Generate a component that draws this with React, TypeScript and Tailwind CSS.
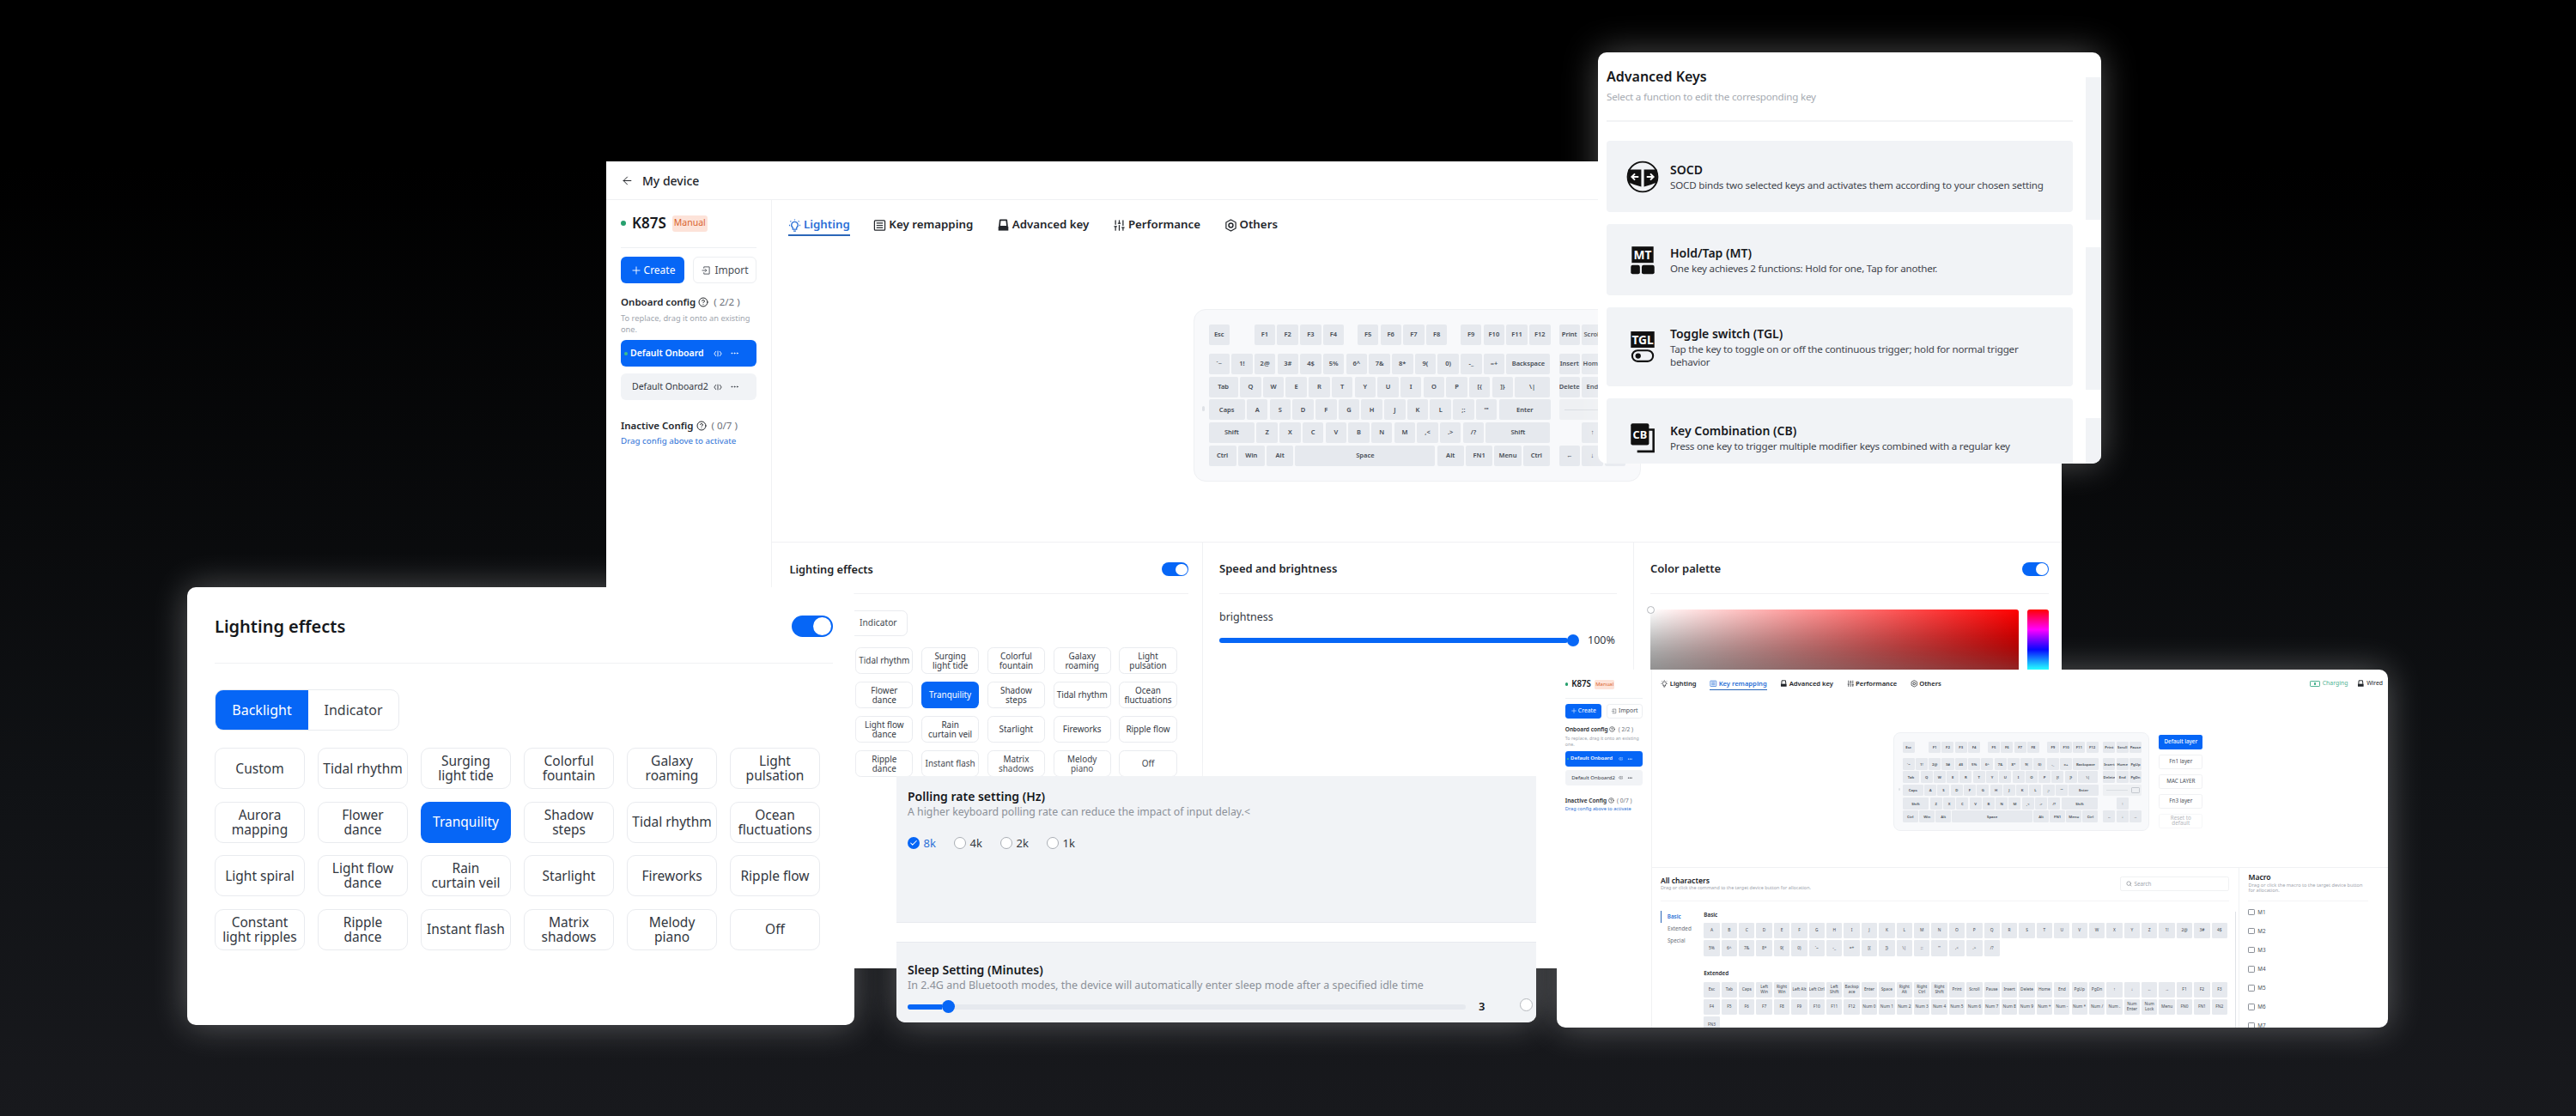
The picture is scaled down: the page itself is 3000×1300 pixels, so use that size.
import { ArrowLeft, Check, CircleHelp, Ellipsis, Plus, Search, SlidersVertical } from "lucide-react";
import React from "react";

const FONT = "[font-family:'Noto_Sans',sans-serif]";

function BulbIcon({ className }: { className?: string }) {
  return (
    <svg viewBox="0 0 16 16" fill="none" stroke="currentColor" strokeWidth="1.4" className={className}>
      <path d="M8 3.5a4 4 0 0 0-2.4 7.2V13h4.8v-2.3A4 4 0 0 0 8 3.5z" strokeLinejoin="round" />
      <path d="M6.5 15h3M8 .5v1.2M2.6 2.6l.9.9M13.4 2.6l-.9.9M1 8h1.2M13.8 8H15" />
    </svg>
  );
}

function ImportIcon({ className }: { className?: string }) {
  return (
    <svg viewBox="0 0 16 16" fill="none" stroke="currentColor" strokeWidth="1.2" className={className}>
      <path d="M5 5V2.5h8.5v11H5V11" />
      <path d="M2 8h7M7 5.8 9.2 8 7 10.2" />
    </svg>
  );
}

function EyeCodeIcon({ className }: { className?: string }) {
  return (
    <svg viewBox="0 0 12 12" fill="none" stroke="currentColor" strokeWidth="1.1" className={className}>
      <path d="M3.5 2.5 1 6l2.5 3.5M8.5 2.5 11 6 8.5 9.5M6 2v8" />
    </svg>
  );
}

function RemapIcon({ className }: { className?: string }) {
  return (
    <svg viewBox="0 0 16 16" fill="none" stroke="currentColor" strokeWidth="1.3" className={className}>
      <rect x="1.5" y="2" width="13" height="12" rx="1" />
      <path d="M4 5.2h8M4 8h8M4 10.8h8" />
    </svg>
  );
}

function KeycapIcon({ className }: { className?: string }) {
  return (
    <svg viewBox="0 0 16 16" fill="none" className={className}>
      <path d="M4 1.5h8l.8 8H3.2z" stroke="currentColor" strokeWidth="1.8" strokeLinejoin="round" />
      <path d="M1.8 9.5h12.4v5H1.8z" fill="currentColor" />
    </svg>
  );
}

function OthersIcon({ className }: { className?: string }) {
  return (
    <svg viewBox="0 0 16 16" fill="none" stroke="currentColor" strokeWidth="1.3" className={className}>
      <path d="M8 1 14 4.3v7.4L8 15l-6-3.3V4.3z" />
      <circle cx="8" cy="8" r="2.6" strokeWidth="1.6" />
    </svg>
  );
}

function Toggle() {
  return (
    <div className="flex h-[25px] w-[48px] items-center justify-end rounded-full bg-[#0666f6] pr-[2px]">
      <div className="size-[21px] rounded-full bg-white" />
    </div>
  );
}

const LIGHT_LABELS = [
  "Custom", "Tidal rhythm", "Surging\nlight tide", "Colorful\nfountain", "Galaxy\nroaming", "Light\npulsation",
  "Aurora\nmapping", "Flower\ndance", "Tranquility", "Shadow\nsteps", "Tidal rhythm", "Ocean\nfluctuations",
  "Light spiral", "Light flow\ndance", "Rain\ncurtain veil", "Starlight", "Fireworks", "Ripple flow",
  "Constant\nlight ripples", "Ripple\ndance", "Instant flash", "Matrix\nshadows", "Melody\npiano", "Off",
];

function LightingPanel() {
  return (
    <div className="pl-[32px] pr-[25px]">
      <div className="flex h-[89px] items-center justify-between border-b border-[#f0f1f3] pt-[3px]">
        <span className="text-[20px] font-semibold text-[#16181c]">Lighting effects</span>
        <Toggle />
      </div>
      <div className="mt-[30px] flex h-[48px] w-[215px] rounded-[10px] border border-[#e9ebef] text-[16px]">
        <div className="flex w-[108px] items-center justify-center rounded-l-[9px] bg-[#0666f6] text-white">Backlight</div>
        <div className="flex flex-1 items-center justify-center text-[#3a3f47]">Indicator</div>
      </div>
      <div className="mt-[20px] grid grid-cols-[repeat(6,105px)] gap-x-[15px] gap-y-[14.5px]">
        {LIGHT_LABELS.map((label, i) => (
          <div
            key={i}
            className={
              label === "Tranquility"
                ? "flex h-[48px] items-center justify-center rounded-[10px] bg-[#0666f6] text-center text-[15.5px] leading-[17px] text-white"
                : "flex h-[48px] items-center justify-center whitespace-pre-line rounded-[10px] border border-[#e9ebef] text-center text-[15.5px] leading-[17px] text-[#33383f]"
            }
          >
            {label}
          </div>
        ))}
      </div>
    </div>
  );
}

function Sidebar({ className }: { className: string }) {
  return (
    <div className={"w-[193px] shrink-0 border-r border-[#f0f1f3] px-[17px] " + className}>
      <div className="flex h-[39px] items-start gap-[7px] border-b border-[#eef0f3]">
        <div className="flex h-[20px] items-center gap-[7px]">
          <div className="size-[6px] rounded-full bg-[#27a06e]" />
          <span className="text-[17px] font-semibold text-[#16181c]">K87S</span>
          <span className="flex h-[19px] w-[41px] items-center justify-center rounded-[3px] bg-[#fde3d9] text-[10.5px] text-[#d9632f]">Manual</span>
        </div>
      </div>
      <div className="mt-[10px] flex gap-[10px] text-[12px]">
        <div className="flex h-[31px] w-[74px] items-center justify-center gap-[2px] rounded-md bg-[#0666f6] text-white">
          <Plus size={14} strokeWidth={1.6} />
          Create
        </div>
        <div className="flex h-[31px] w-[74px] items-center justify-center gap-[4px] rounded-md border border-[#eceef1] text-[#4a4f57]">
          <ImportIcon className="size-[12px]" />
          Import
        </div>
      </div>
      <div className="mt-[14px] flex items-center gap-[3px] text-[11.5px] leading-[16px]">
        <span className="font-semibold text-[#23262b]">Onboard config</span>
        <CircleHelp size={12} className="text-[#23262b]" />
        <span className="ml-[3px] text-[#6b7079]">( 2/2 )</span>
      </div>
      <p className="mt-[4px] text-[9.3px] leading-[13px] text-[#a0a5ad]">To replace, drag it onto an existing one.</p>
      <div className="mt-[6px] flex h-[31px] items-center rounded-md bg-[#0666f6] pl-[4px] text-[10.5px] font-semibold text-white">
        <div className="mr-[3px] size-[4px] rounded-full bg-[#3cc08c]" />
        <span className="w-[97px] whitespace-nowrap">Default Onboard</span>
        <EyeCodeIcon className="size-[10px]" />
        <Ellipsis size={11} className="ml-[9px]" />
      </div>
      <div className="mt-[8px] flex h-[31px] items-center rounded-md bg-[#f1f3f6] pl-[13px] text-[10.5px] text-[#33383f]">
        <span className="w-[95px] whitespace-nowrap">Default Onboard2</span>
        <EyeCodeIcon className="size-[10px]" />
        <Ellipsis size={11} className="ml-[9px]" />
      </div>
      <div className="mt-[22px] flex items-center gap-[3px] text-[11.5px] leading-[16px]">
        <span className="font-semibold text-[#23262b]">Inactive Config</span>
        <CircleHelp size={12} className="text-[#23262b]" />
        <span className="ml-[3px] text-[#6b7079]">( 0/7 )</span>
      </div>
      <p className="mt-[2px] text-[9.8px] leading-[15px] text-[#2a6fd6]">Drag config above to activate</p>
    </div>
  );
}

const TABS: [string, (p: { className?: string }) => React.ReactNode][] = [
  ["Lighting", BulbIcon],
  ["Key remapping", RemapIcon],
  ["Advanced key", KeycapIcon],
  ["Performance", ({ className }) => <SlidersVertical className={className} strokeWidth={2} />],
  ["Others", OthersIcon],
];

function Tabs({ active }: { active: number }) {
  return (
    <div className="flex gap-[27.5px]">
      {TABS.map(([label, Icon], i) => (
        <div
          key={label}
          className={
            i === active
              ? "flex h-[24px] items-center gap-[3px] border-b-2 border-[#2b66b8] text-[13.3px] font-semibold text-[#2a6fd6]"
              : "flex h-[24px] items-center gap-[3px] border-b-2 border-transparent text-[13.3px] font-semibold text-[#23262b]"
          }
        >
          <Icon className="size-[15px]" />
          {label}
        </div>
      ))}
    </div>
  );
}

type K = [string, number?];
const u = 24.5;
const keyRows: K[][] = [
  [["`~"], ["1!"], ["2@"], ["3#"], ["4$"], ["5%"], ["6^"], ["7&"], ["8*"], ["9("], ["0)"], ["-_"], ["=+"], ["Backspace", 51]],
  [["Tab", 34.4], ["Q"], ["W"], ["E"], ["R"], ["T"], ["Y"], ["U"], ["I"], ["O"], ["P"], ["[{"], ["]}"], ["\\|", 40.3]],
  [["Caps", 42.3], ["A"], ["S"], ["D"], ["F"], ["G"], ["H"], ["J"], ["K"], ["L"], [";:"], ["'\""], ["Enter", 60.5]],
  [["Shift", 53.8], ["Z"], ["X"], ["C"], ["V"], ["B"], ["N"], ["M"], [",<"], [".>"], ["/?"], ["Shift", 75]],
  [["Ctrl", 32], ["Win", 31.2], ["Alt", 31.2], ["Space", 163], ["Alt", 31.2], ["FN1", 31.2], ["Menu", 31.2], ["Ctrl", 31.2]],
];
const navRows = [
  ["Insert", "Home", "PgUp"],
  ["Delete", "End", "PgDn"],
];

function Keycap({ label, w = u }: { label: string; w?: number }) {
  return (
    <div
      className="flex h-[24px] shrink-0 items-center justify-center overflow-hidden rounded-[2px] bg-[#e6e9ee] text-[7.5px] font-semibold text-[#454b54]"
      style={{ width: w }}
    >
      {label}
    </div>
  );
}

function Keyboard() {
  return (
    <div className="relative flex h-[201px] w-[521px] shrink-0 gap-[10px] rounded-[14px] border border-[#eef0f3] bg-[#f8f9fb] pl-[17px] pt-[17px]">
      <div className="absolute left-[9px] top-[112px] h-[6px] w-[3px] rounded-full bg-[#dfe2e7]" />
      <div className="w-[398px]">
        <div className="mb-[10px] flex h-[24px]">
          <Keycap label="Esc" />
          <div className="w-[29.5px]" />
          <div className="flex gap-[2.2px]">
            {["F1", "F2", "F3", "F4"].map((k) => <Keycap key={k} label={k} />)}
          </div>
          <div className="w-[16px]" />
          <div className="flex gap-[2.2px]">
            {["F5", "F6", "F7", "F8"].map((k) => <Keycap key={k} label={k} />)}
          </div>
          <div className="w-[16px]" />
          <div className="flex gap-[2.2px]">
            {["F9", "F10", "F11", "F12"].map((k) => <Keycap key={k} label={k} />)}
          </div>
        </div>
        <div className="flex flex-col gap-[2.7px]">
          {keyRows.map((row, i) => (
            <div key={i} className="flex gap-[2.2px]">
              {row.map(([label, w], j) => <Keycap key={j} label={label} w={w} />)}
            </div>
          ))}
        </div>
      </div>
      <div className="w-[78px]">
        <div className="mb-[10px] flex gap-[2.2px]">
          {["Print", "Scroll", "Pause"].map((k) => <Keycap key={k} label={k} />)}
        </div>
        <div className="flex flex-col gap-[2.7px]">
          {navRows.map((row, i) => (
            <div key={i} className="flex gap-[2.2px]">
              {row.map((k) => <Keycap key={k} label={k} />)}
            </div>
          ))}
          <div className="flex h-[24px] items-center justify-between rounded-[2px] bg-[#eef0f3] pl-[6px] pr-[3px]">
            <div className="h-px w-[44px] bg-[#dadde2]" />
            <div className="h-[13px] w-[18px] rounded-[2px] border border-[#c4c8cf]" />
          </div>
          <div className="flex justify-center"><Keycap label="↑" /></div>
          <div className="flex gap-[2.2px]">
            {["←", "↓", "→"].map((k) => <Keycap key={k} label={k} />)}
          </div>
        </div>
      </div>
    </div>
  );
}

function MainWindow() {
  return (
    <div className="absolute left-[706px] top-[188px] flex h-[940px] w-[1695px] flex-col bg-white">
      <div className="flex h-[45px] shrink-0 items-center gap-[10px] border-b border-[#f0f1f3] pl-[17px] text-[14px] font-medium text-[#23262b]">
        <ArrowLeft size={15} strokeWidth={1.6} />
        My device
      </div>
      <div className="flex flex-1">
        <Sidebar className="pt-[17px]" />
        <div className="flex flex-1 flex-col">
          <div className="pl-[19px] pt-[18px]"><Tabs active={0} /></div>
          <div className="flex h-[357px] items-center justify-center border-b border-[#f0f1f3] pt-[15px]"><Keyboard /></div>
          <div className="flex flex-1">
            <div className="w-[502px] shrink-0 border-r border-[#f0f1f3]">
              <div className="pt-[4px] [zoom:0.64]"><LightingPanel /></div>
            </div>
            <div className="w-[502px] shrink-0 border-r border-[#f0f1f3] px-[19px]">
              <div className="flex h-[60px] items-center border-b border-[#f0f1f3] pt-[3px] text-[13px] font-semibold text-[#23262b]">Speed and brightness</div>
              <div className="mt-[18px] text-[12.5px] leading-[17px] text-[#33383f]">brightness</div>
              <div className="mt-[10px] flex items-center">
                <div className="h-[6px] w-[406px] rounded-full bg-[#0666f6]" />
                <div className="-ml-[1px] h-[14px] w-[14px] rounded-full bg-[#0666f6]" />
                <span className="ml-[10px] text-[12.5px] text-[#33383f]">100%</span>
              </div>
            </div>
            <div className="flex-1 pl-[19px] pr-[15px]">
              <div className="flex h-[60px] items-center justify-between border-b border-[#f0f1f3] pt-[3px] text-[13px] font-semibold text-[#23262b]">
                Color palette
                <div className="[zoom:0.64]"><Toggle /></div>
              </div>
              <div className="relative mt-[18px] flex gap-[10px]">
                <div className="absolute -left-[4px] -top-[4px] size-[9px] rounded-full border border-[#b5b8bd] bg-white" />
                <div className="h-[140px] w-[429px] rounded-[3px] bg-[linear-gradient(to_top,#000,transparent),linear-gradient(to_right,#fff,#f00)]" />
                <div className="h-[140px] w-[25px] rounded-[3px] bg-[linear-gradient(to_bottom,#f00,#f0f,#00f,#0ff,#0f0,#ff0,#f00)]" />
              </div>
            </div>
          </div>
        </div>
      </div>
    </div>
  );
}

const ADV = [
  {
    t: "SOCD",
    d: "SOCD binds two selected keys and activates them according to your chosen setting",
    h: "h-[83px]",
    icon: (
      <svg viewBox="0 0 36 36" className="size-[38px]">
        <circle cx="18" cy="18" r="16.5" fill="none" stroke="#111" strokeWidth="1.8" />
        <path d="M2 10h14.5v19l-8-2.5L2 24zM19.5 10H34v14l-6.5 2.5-8 2.5z" fill="#111" />
        <path d="M13.5 18H6m3.5-3.5L6 18l3.5 3.5M22.5 18H30m-3.5-3.5L30 18l-3.5 3.5" fill="none" stroke="#fff" strokeWidth="1.8" />
      </svg>
    ),
  },
  {
    t: "Hold/Tap (MT)",
    d: "One key achieves 2 functions: Hold for one, Tap for another.",
    h: "h-[83px]",
    icon: (
      <svg viewBox="0 0 36 36" className="size-[38px]">
        <rect x="6" y="3" width="24" height="18" fill="#111" />
        <text x="18" y="17" textAnchor="middle" fontSize="13" fontWeight="700" fill="#fff" fontFamily="Noto Sans, sans-serif">MT</text>
        <rect x="5" y="23.5" width="10" height="10" rx="2" fill="#111" />
        <rect x="17" y="23.5" width="14" height="10" rx="2" fill="#111" />
      </svg>
    ),
  },
  {
    t: "Toggle switch (TGL)",
    d: "Tap the key to toggle on or off the continuous trigger; hold for normal trigger behavior",
    h: "h-[92px]",
    icon: (
      <svg viewBox="0 0 36 36" className="size-[38px]">
        <rect x="5" y="1" width="26" height="18" fill="#111" />
        <text x="18" y="15" textAnchor="middle" fontSize="13" fontWeight="700" fill="#fff" fontFamily="Noto Sans, sans-serif">TGL</text>
        <rect x="6.5" y="22" width="23" height="12" rx="6" fill="none" stroke="#111" strokeWidth="2" />
        <circle cx="13" cy="28" r="3" fill="#111" />
      </svg>
    ),
  },
  {
    t: "Key Combination (CB)",
    d: "Press one key to trigger multiple modifier keys combined with a regular key",
    h: "h-[90px]",
    icon: (
      <svg viewBox="0 0 36 36" className="size-[38px]">
        <path d="M12 10h18v24H12" fill="none" stroke="#111" strokeWidth="2.4" />
        <rect x="5" y="3" width="20" height="24" rx="2" fill="#111" />
        <text x="15" y="20" textAnchor="middle" fontSize="12" fontWeight="700" fill="#fff" fontFamily="Noto Sans, sans-serif">CB</text>
      </svg>
    ),
  },
];

function AdvancedWindow() {
  return (
    <div className="absolute left-[1861px] top-[61px] flex h-[479px] w-[586px] overflow-hidden rounded-[10px] bg-white shadow-[0_0_40px_rgba(255,255,255,0.3)]">
      <div className="w-[553px] shrink-0 pl-[10px]">
        <div className="h-[81px] border-b-2 border-[#f2f3f5] pt-[15px]">
          <div className="text-[16px] font-semibold leading-[26px] text-[#16181c]">Advanced Keys</div>
          <div className="mt-[1px] text-[11.6px] leading-[20px] tracking-[-0.2px] text-[#a5aab1]">Select a function to edit the corresponding key</div>
        </div>
        <div className="mt-[22px] flex flex-col gap-[14px]">
          {ADV.map((a) => (
            <div key={a.t} className={a.h + " flex shrink-0 items-center rounded-[4px] bg-[#f1f3f6] pl-[22px] pr-[29px]"}>
              <div className="mr-[13px] flex w-[39px] shrink-0 justify-center">{a.icon}</div>
              <div>
                <div className="text-[14px] font-semibold leading-[20px] text-[#16181c]">{a.t}</div>
                <div className="text-[11.6px] leading-[15px] tracking-[-0.2px] text-[#3f444c]">{a.d}</div>
              </div>
            </div>
          ))}
        </div>
      </div>
      <div className="ml-[15px] flex flex-1 flex-col pt-[29px]">
        <div className="h-[166px] shrink-0 bg-[#f1f3f6]" />
        <div className="mt-[32px] h-[166px] shrink-0 bg-[#f1f3f6]" />
        <div className="mt-[33px] h-[60px] shrink-0 bg-[#f1f3f6]" />
      </div>
    </div>
  );
}

function LightingWindow() {
  return (
    <div className="absolute left-[218px] top-[684px] h-[510px] w-[777px] rounded-[10px] bg-white shadow-[0_0_40px_rgba(255,255,255,0.3)]">
      <LightingPanel />
    </div>
  );
}

function PollingWindow() {
  return (
    <div className="absolute left-[1044px] top-[904px] flex h-[287px] w-[745px] flex-col overflow-hidden rounded-b-[10px] bg-white shadow-[0_0_40px_rgba(255,255,255,0.3)]">
      <div className="h-[171px] shrink-0 border-b border-[#e8eaef] bg-[#f1f3f6] pl-[13px] pt-[14px]">
        <div className="text-[14px] font-semibold leading-[20px] text-[#16181c]">Polling rate setting (Hz)</div>
        <div className="text-[12.3px] leading-[16px] text-[#8b9098]">A higher keyboard polling rate can reduce the impact of input delay.&lt;</div>
        <div className="mt-[19px] flex gap-[21px] text-[13px] leading-[18px] text-[#33383f]">
          <div className="flex w-[33px] items-center gap-[5px] text-[#2a6fd6]">
            <div className="flex size-[14px] items-center justify-center rounded-full bg-[#0666f6] text-white"><Check size={10} strokeWidth={2.5} /></div>
            8k
          </div>
          {["4k", "2k", "1k"].map((r) => (
            <div key={r} className="flex w-[33px] items-center gap-[5px]">
              <div className="size-[14px] rounded-full border border-[#a9adb4] bg-white" />
              {r}
            </div>
          ))}
        </div>
      </div>
      <div className="h-[22px] shrink-0 bg-white" />
      <div className="flex-1 border-t border-[#e8eaef] bg-[#f1f3f6] pl-[13px] pt-[22px]">
        <div className="text-[14px] font-semibold leading-[20px] text-[#16181c]">Sleep Setting (Minutes)</div>
        <div className="text-[12.5px] leading-[16px] text-[#8b9098]">In 2.4G and Bluetooth modes, the device will automatically enter sleep mode after a specified idle time</div>
        <div className="mt-[9px] flex h-[15px] items-center">
          <div className="flex h-[6px] w-[650px] items-center rounded-full bg-[#e6e9ee]">
            <div className="h-[6px] w-[40px] rounded-l-full bg-[#0666f6]" />
            <div className="size-[15px] rounded-full bg-[#0666f6]" />
          </div>
          <span className="ml-[15px] text-[13px] font-semibold text-[#16181c]">3</span>
          <div className="ml-[41px] -mt-[4px] size-[15px] rounded-full border border-[#b5b8bd] bg-white" />
        </div>
      </div>
    </div>
  );
}

const BASIC = "A B C D E F G H I J K L M N O P Q R S T U V W X Y Z 1! 2@ 3# 4$ 5% 6^ 7& 8* 9( 0) `~ -_ =+ [{ ]} \\| ;: '\" ,< .> /?".split(" ");
const EXTENDED = [
  "Esc", "Tab", "Caps", "Left Win", "Right Win", "Left Alt", "Left Ctrl", "Left Shift", "Backsp ace", "Enter", "Space", "Right Alt", "Right Ctrl", "Right Shift", "Print", "Scroll", "Pause", "Insert", "Delete", "Home", "End", "PgUp", "PgDn", "↑", "↓", "←", "→", "F1", "F2", "F3",
  "F4", "F5", "F6", "F7", "F8", "F9", "F10", "F11", "F12", "Num 0", "Num 1", "Num 2", "Num 3", "Num 4", "Num 5", "Num 6", "Num 7", "Num 8", "Num 9", "Num +", "Num -", "Num *", "Num /", "Num .", "Num Enter", "Num Lock", "Menu", "FN0", "FN1", "FN2",
  "FN3",
];

function CharGrid({ keys }: { keys: string[] }) {
  return (
    <div className="grid grid-cols-[repeat(30,32px)] gap-[3.6px]">
      {keys.map((k, i) => (
        <div key={i} className="flex h-[32px] items-center justify-center rounded-[2px] bg-[#e6e9ee] text-center text-[8.5px] leading-[10px] text-[#454b54]">
          {k}
        </div>
      ))}
    </div>
  );
}

function RemapWindow() {
  return (
    <div className="absolute left-[1813px] top-[780px] h-[417px] w-[968px] overflow-hidden rounded-[10px] bg-white shadow-[0_0_40px_rgba(255,255,255,0.3)]">
      <div className="flex h-[728px] w-[1689px] [zoom:0.573]">
        <Sidebar className="pt-[20px]" />
        <div className="flex flex-1 flex-col">
          <div className="flex h-[127px] items-start justify-between pl-[19px] pr-[10px] pt-[18px]">
            <Tabs active={1} />
            <div className="flex h-[22px] items-center gap-[18px] text-[12px]">
              <div className="flex items-center gap-[5px] text-[#4fb393]">
                <div className="flex h-[12px] w-[20px] items-center justify-center rounded-[2px] border border-[#4fb393]"><div className="size-[4px] bg-[#4fb393]" /></div>
                Charging
              </div>
              <div className="flex items-center gap-[5px] text-[#23262b]">
                <KeycapIcon className="size-[15px]" />
                Wired
              </div>
            </div>
          </div>
          <div className="flex h-[276px] gap-[19px] border-b border-[#f0f1f3] pl-[491px]">
            <Keyboard />
            <div className="flex w-[89px] flex-col gap-[10px] pt-[6px] text-[11px] leading-[12px]">
              <div className="flex h-[30px] items-center justify-center rounded-[4px] bg-[#0666f6] font-medium text-white">Default layer</div>
              <div className="flex h-[30px] items-center justify-center rounded-[4px] border border-[#f0f1f3] text-[#4a4f57]">Fn1 layer</div>
              <div className="flex h-[30px] items-center justify-center rounded-[4px] border border-[#f0f1f3] text-[#4a4f57]">MAC LAYER</div>
              <div className="flex h-[30px] items-center justify-center rounded-[4px] border border-[#f0f1f3] text-[#4a4f57]">Fn3 layer</div>
              <div className="flex h-[30px] items-center justify-center whitespace-pre-line rounded-[4px] border border-[#f6f7f8] text-center text-[#b5b8bd]">{"Reset to\ndefault"}</div>
            </div>
          </div>
          <div className="flex flex-1 overflow-hidden">
            <div className="relative w-[1192px] shrink-0 px-[18px]">
              <div className="flex h-[68px] items-center justify-between border-b border-[#f3f4f6]">
                <div>
                  <div className="text-[15px] font-semibold leading-[18px] text-[#16181c]">All characters</div>
                  <div className="text-[9.5px] leading-[13px] text-[#a0a5ad]">Drag or click the command to the target device button for allocation.</div>
                </div>
                <div className="flex h-[30px] w-[223px] items-center gap-[4px] rounded-[4px] border border-[#f0f1f3] pl-[12px] text-[11px] text-[#a0a5ad]">
                  <Search size={12} className="text-[#6b7079]" />
                  Search
                </div>
              </div>
              <div className="flex pt-[19px]">
                <div className="w-[88px] shrink-0 text-[11px] leading-[24.5px] text-[#6b7079]">
                  <div className="border-l-2 border-[#2b66b8] pl-[12px] font-semibold text-[#2a6fd6]">Basic</div>
                  <div className="pl-[14px]">Extended</div>
                  <div className="pl-[14px]">Special</div>
                </div>
                <div>
                  <div className="text-[11px] font-semibold leading-[18px] text-[#23262b]">Basic</div>
                  <div className="mt-[7px]"><CharGrid keys={BASIC} /></div>
                  <div className="mt-[27px] text-[11px] font-semibold leading-[18px] text-[#23262b]">Extended</div>
                  <div className="mt-[7px]"><CharGrid keys={EXTENDED} /></div>
                </div>
              </div>
              <div className="absolute bottom-0 left-[1185px] top-[89px] w-[2px] bg-[#dfe2e7]" />
            </div>
            <div className="flex-1 border-l border-[#f0f1f3] pl-[19px] pr-[40px]">
              <div className="h-[68px] border-b border-[#f3f4f6] pt-[11px]">
                <div className="text-[15px] font-semibold leading-[18px] text-[#16181c]">Macro</div>
                <div className="text-[9.8px] leading-[12px] text-[#a0a5ad]">Drag or click the macro to the target device button for allocation.</div>
              </div>
              <div className="mt-[12px] flex flex-col gap-[18.6px] text-[11px] leading-[20px] text-[#4a4f57]">
                {["M1", "M2", "M3", "M4", "M5", "M6", "M7"].map((m) => (
                  <div key={m} className="flex items-center gap-[6px]">
                    <div className="flex size-[13px] items-center justify-center rounded-[2px] border-2 border-[#8b9098]" />
                    {m}
                  </div>
                ))}
              </div>
            </div>
          </div>
        </div>
      </div>
    </div>
  );
}

export default function App() {
  return (
    <div className={FONT + " relative h-[1300px] w-[3000px] overflow-hidden bg-[linear-gradient(to_bottom,#000_15%,#101215_70%,#18191d_100%)]"}>
      <MainWindow />
      <AdvancedWindow />
      <LightingWindow />
      <PollingWindow />
      <RemapWindow />
    </div>
  );
}
